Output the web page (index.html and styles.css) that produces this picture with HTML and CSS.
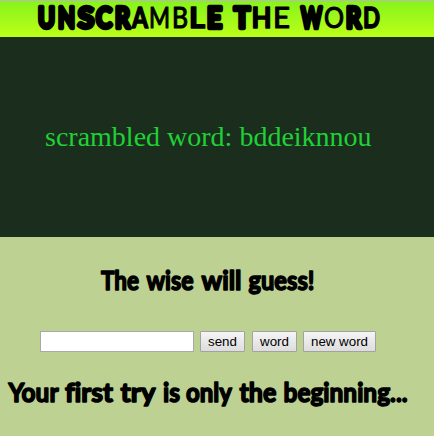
FILE: index.html
```
<!DOCTYPE html>
<html lang="en">
<head>
<meta charset="utf-8">
<title>Unscramble the Word</title>
<link rel="stylesheet" href="styles.css">
</head>
<body>
<header class="header">
<svg class="title" viewBox="0 0 434 35" role="heading" aria-level="1">
<text y="26.7"><tspan class="heavy" x="38" textLength="17" lengthAdjust="spacingAndGlyphs">U</tspan><tspan class="heavy" x="58" textLength="17" lengthAdjust="spacingAndGlyphs">N</tspan><tspan class="heavy" x="78" textLength="16" lengthAdjust="spacingAndGlyphs">S</tspan><tspan class="heavy" x="96" textLength="16" lengthAdjust="spacingAndGlyphs">C</tspan><tspan class="heavy" x="115" textLength="15" lengthAdjust="spacingAndGlyphs">R</tspan><tspan class="medium" x="132" textLength="16" lengthAdjust="spacingAndGlyphs">A</tspan><tspan class="light" x="149" textLength="21" lengthAdjust="spacingAndGlyphs">M</tspan><tspan class="light" x="172" textLength="16" lengthAdjust="spacingAndGlyphs">B</tspan><tspan class="medium" x="189" textLength="16" lengthAdjust="spacingAndGlyphs">L</tspan><tspan class="heavy" x="207" textLength="15" lengthAdjust="spacingAndGlyphs">E</tspan></text>
<text y="26.7"><tspan class="heavy" x="234" textLength="16" lengthAdjust="spacingAndGlyphs">T</tspan><tspan class="medium" x="251.5" textLength="20" lengthAdjust="spacingAndGlyphs">H</tspan><tspan class="light" x="273" textLength="17" lengthAdjust="spacingAndGlyphs">E</tspan></text>
<text y="26.7"><tspan class="heavy" x="301" textLength="21" lengthAdjust="spacingAndGlyphs">W</tspan><tspan class="light" x="324" textLength="20" lengthAdjust="spacingAndGlyphs">O</tspan><tspan class="heavy" x="346" textLength="15" lengthAdjust="spacingAndGlyphs">R</tspan><tspan class="medium" x="363" textLength="17" lengthAdjust="spacingAndGlyphs">D</tspan></text>
</svg>
</header>
<section class="puzzle"><p class="scrambled">scrambled word: bddeiknnou</p></section>
<main class="game">
<svg class="message" viewBox="0 0 434 50">
<text x="101" y="31.5" textLength="38" lengthAdjust="spacingAndGlyphs">The</text>
<text x="146.5" y="31.5" textLength="47" lengthAdjust="spacingAndGlyphs">wise</text>
<text x="201.5" y="31.5" textLength="40" lengthAdjust="spacingAndGlyphs">will</text>
<text x="248.5" y="31.5" textLength="66" lengthAdjust="spacingAndGlyphs">guess!</text>
</svg>
<form class="controls">
<input class="guess" type="text" aria-label="Guess">
<button class="button send" type="button">send</button>
<button class="button word" type="button">word</button>
<button class="button new-word" type="button">new word</button>
</form>
<svg class="message" viewBox="0 0 434 50">
<text x="8.5" y="31.5" textLength="50" lengthAdjust="spacingAndGlyphs">Your</text>
<text x="65" y="31.5" textLength="48" lengthAdjust="spacingAndGlyphs">first</text>
<text x="120.5" y="31.5" textLength="35" lengthAdjust="spacingAndGlyphs">try</text>
<text x="163" y="31.5" textLength="17" lengthAdjust="spacingAndGlyphs">is</text>
<text x="186" y="31.5" textLength="46" lengthAdjust="spacingAndGlyphs">only</text>
<text x="239.5" y="31.5" textLength="37" lengthAdjust="spacingAndGlyphs">the</text>
<text x="283.5" y="31.5" textLength="124" lengthAdjust="spacingAndGlyphs">beginning...</text>
</svg>
</main>
</body>
</html>
```
FILE: styles.css
```
* { box-sizing: border-box; }
body {
  margin: 0;
  height: 436px;
  overflow: hidden;
  background: #bdd193;
  color: #000;
}
svg { display: block; width: 434px; overflow: visible; }
.header {
  height: 37px;
  border-top: 1px solid #b9b9b9;
  background: linear-gradient(#86f31b, #bcff18);
}
.title {
  height: 35px;
  font: 400 29px Lato, sans-serif;
}
.title tspan {
  stroke: #000;
  stroke-linejoin: round;
}
.title .heavy { font-weight: 700; stroke-width: 4.4px; }
.title .medium { font-weight: 700; stroke-width: 1.6px; }
.title .light { font-weight: 400; stroke-width: 1.2px; }
.puzzle {
  height: 200px;
  padding: 82px 0 0 45px;
  background: #1b2e1d;
}
.scrambled {
  margin: 0;
  color: #1fd136;
  font: 28px/35px "Liberation Serif", serif;
  white-space: nowrap;
}
.game { padding-top: 21px; }
.message {
  height: 50px;
  font: 700 27px Lato, sans-serif;
  font-variant-ligatures: none;
}
.message text {
  stroke: #000;
  stroke-width: 1.6px;
  stroke-linejoin: round;
}
.controls {
  display: flex;
  height: 21px;
  margin: 23px 0 18px 40px;
}
.guess {
  width: 154px;
  height: 21px;
  margin: 0 6px 0 0;
  border: 1px solid #a9a9a9;
  background: #fff;
}
.button {
  height: 21px;
  margin: 0;
  padding: 0;
  border: 1px solid #a2a2a2;
  border-radius: 1px;
  background: linear-gradient(#f5f5f5, #dddddd);
  color: #000;
  font: 13.333px/18px "Liberation Sans", sans-serif;
}
.send { width: 45px; margin-right: 7px; }
.word { width: 45px; margin-right: 6px; }
.new-word { width: 73px; }
```
